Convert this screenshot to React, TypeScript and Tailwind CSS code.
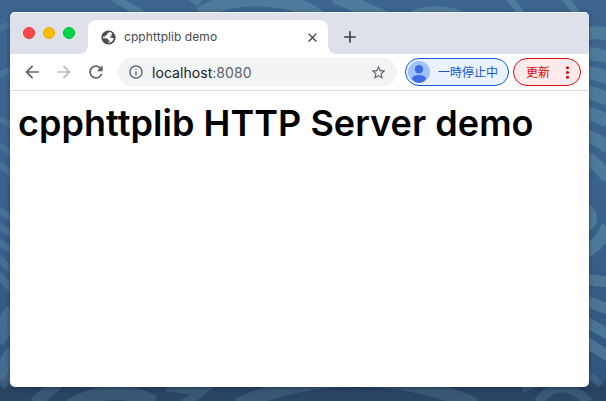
import React from "react";
import { MdArrowBack, MdArrowForward, MdRefresh, MdInfoOutline, MdStarBorder, MdClose, MdAdd, MdMoreVert } from "react-icons/md";

function Wallpaper() {
  return (
    <svg className="absolute inset-0" width="606" height="401" viewBox="0 0 606 401" aria-hidden="true">
      <defs>
        <linearGradient id="sea" x1="0" y1="0" x2="0" y2="1">
          <stop offset="0" stopColor="#3d658f" />
          <stop offset="0.5" stopColor="#3a628d" />
          <stop offset="0.94" stopColor="#31577f" />
          <stop offset="0.97" stopColor="#28435f" />
          <stop offset="1" stopColor="#294867" />
        </linearGradient>
      </defs>
      <rect width="606" height="401" fill="url(#sea)" />
      <g fill="none" stroke="#6390a8" strokeOpacity="0.5">
        <path d="M113 -3L142 14" strokeWidth="8" />
        <path d="M190 -4L200 3" strokeWidth="8" />
        <path d="M200 14Q235 -8 290 3Q308 8 320 18" strokeWidth="14" />
        <path d="M335 -4L385 18" strokeWidth="14" />
        <path d="M412 13Q435 5 462 13" strokeWidth="5" />
        <path d="M508 -3L522 14M564 -3L577 14" strokeWidth="7" />
        <path d="M586 33Q598 32 608 34M586 53Q598 54 608 57M586 72Q598 74 608 78M586 92Q598 94 608 100M586 113Q598 115 608 122M586 135Q598 140 608 147M586 158Q598 164 608 178" strokeWidth="13" />
        <circle cx="582" cy="218" r="10" strokeWidth="10" />
        <path d="M586 252Q602 242 608 226" strokeWidth="13" />
        <path d="M586 279Q597 281 608 282M586 301Q597 305 608 309M586 322L608 334M586 342L608 356" strokeWidth="11" />
      </g>
      <g fill="none" stroke="#5c88a8" strokeOpacity="0.4">
        <path d="M-2 29L12 24M-2 75L12 69M-2 119Q7 121 12 128M-2 145Q7 147 12 157M-2 165Q7 168 12 177" strokeWidth="6" />
        <path d="M-2 210L12 218M-2 226L12 234M-2 242L12 250M-2 258L12 270M-2 274L12 290" strokeWidth="7" />
        <path d="M-2 330L12 309M-2 342L12 322M-2 377L12 350" strokeWidth="12" />
      </g>
      <g fill="none" stroke="#587694" strokeOpacity="0.38">
        <path d="M0 385L12 373M35 403L58 383" strokeWidth="12" />
        <path d="M70 406Q112 382 154 402" strokeWidth="14" />
        <path d="M166 387L202 391L184 404" strokeWidth="9" />
        <path d="M238 405Q308 373 393 382Q439 388 475 405" strokeWidth="14" />
        <path d="M538 402Q560 374 589 402" strokeWidth="9" />
        <path d="M522 389L535 384M590 375L601 385" strokeWidth="7" />
      </g>
    </svg>
  );
}

function GlobeIcon() {
  return (
    <svg width="15" height="15" viewBox="0 0 15 15" className="block">
      <circle cx="7.5" cy="7.5" r="7.1" fill="#4b4f54" />
      <path d="M8.8 2L6.2 3.4V4.9H4.6V6.4L2 6.8V8.2H5.4L7.2 9.1V10.5H8.8V11.5L6.4 12.8Q11.4 13.2 12.8 8.3L9.8 7.8L8.4 6.4H10.4V4.8L11.4 3.6Q10 2.3 8.8 2Z" fill="#fff" />
    </svg>
  );
}

export default function App() {
  return (
    <main className="relative h-[401px] w-[606px] overflow-hidden px-[10px] pt-3 font-[Inter,'Noto_Sans_CJK_JP',sans-serif]">
      <Wallpaper />
      <section className="relative flex h-[375px] w-[579px] flex-col overflow-hidden rounded-[5px] bg-white shadow-[0_1px_4px_#071b3280]">
        <header className="flex h-[42px] shrink-0 border-t border-[#f0f2f5] bg-[#dee1e9]">
          <div className="flex w-[78px] gap-2 pl-[13px] pt-[14px]">
            <i className="size-3 rounded-full border border-[#e33338] bg-[#ff4648]" />
            <i className="size-3 rounded-full border border-[#e8a800] bg-[#ffbd00]" />
            <i className="size-3 rounded-full border border-[#00bd35] bg-[#00d545]" />
          </div>
          <div className="relative mt-[7px] flex h-[34px] w-[240px] items-center rounded-t-[8px] bg-white pl-[13px] pr-[8px]">
            <i className="absolute -left-2 bottom-0 size-2 bg-[radial-gradient(circle_at_0_0,#dee1e9_7.5px,#fff_8px)]" />
            <GlobeIcon />
            <span className="ml-2 flex-1 text-[12px] tracking-[0.07px] text-[#45494d]">cpphttplib demo</span>
            <MdClose size={15} color="#3c4043" />
            <i className="absolute -right-2 bottom-0 size-2 bg-[radial-gradient(circle_at_100%_0,#dee1e9_7.5px,#fff_8px)]" />
          </div>
          <MdAdd className="ml-[12px] mt-[14px]" size={20} color="#3c4043" />
        </header>
        <div className="flex h-[37px] shrink-0 items-center border-b border-[#d9dade] pl-[12px] pr-2">
          <MdArrowBack size={20} color="#5f6368" />
          <MdArrowForward className="ml-3" size={20} color="#babcbe" />
          <MdRefresh className="ml-3" size={20} color="#5f6368" />
          <div className="ml-3 flex h-7 w-[279px] items-center rounded-full bg-[#f1f3f4] pl-[10px] pr-[10px]">
            <MdInfoOutline size={16} color="#5f6368" />
            <span className="ml-2 flex-1 text-[14px] tracking-[0.05px] text-[#202124]">localhost<span className="text-[#5f6368]">:8080</span></span>
            <MdStarBorder size={17} color="#5f6368" />
          </div>
          <div className="ml-2 flex h-7 w-[104px] items-center rounded-full border border-[#1a56d6] bg-[#eaf2fd] pl-[2px] font-['Noto_Sans_CJK_JP',sans-serif] text-[12px] text-[#1a56c8]">
            <svg width="22" height="22" viewBox="0 0 22 22">
              <circle cx="11" cy="11" r="11" fill="#9fc3ff" />
              <circle cx="11" cy="8.3" r="4.2" fill="#4169e1" />
              <path d="M3.8 17.8Q5 14 11 14T18.2 17.8Q15.5 21.8 11 22Q6.5 21.8 3.8 17.8Z" fill="#4169e1" />
            </svg>
            <span className="ml-2 whitespace-nowrap">一時停止中</span>
          </div>
          <div className="ml-1 flex h-7 w-[68px] items-center rounded-full border border-[#dc0d13] bg-[#fdebec] pl-3 font-['Noto_Sans_CJK_JP',sans-serif] text-[12px] text-[#d9070d]">
            <span className="whitespace-nowrap">更新</span>
            <MdMoreVert className="ml-[8px] shrink-0" size={19} />
          </div>
        </div>
        <article className="pl-2 pt-[9px]">
          <h1 className="whitespace-nowrap text-[36px] font-semibold leading-[47px] tracking-[0.04px] text-black">cpphttplib HTTP Server demo</h1>
        </article>
      </section>
    </main>
  );
}
